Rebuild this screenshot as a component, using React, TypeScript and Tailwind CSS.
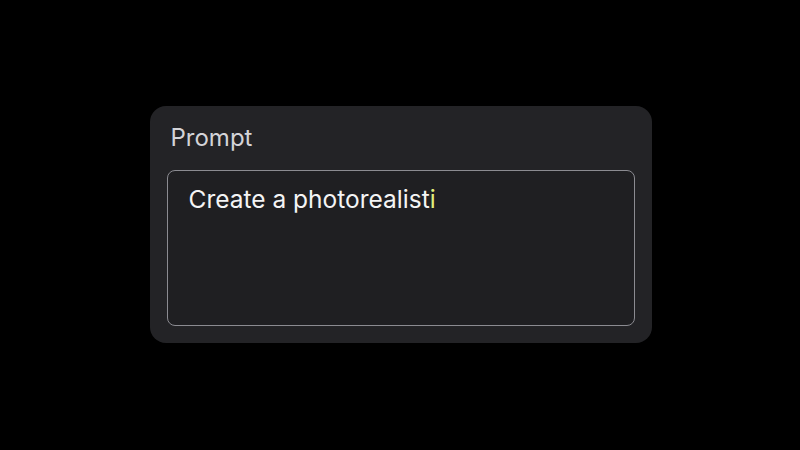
export default function App() {
  return (
    <div className="w-[800px] h-[450px] bg-black flex items-center justify-center" style={{ fontFamily: 'Inter, "Noto Sans", sans-serif' }}>
      <div className="w-[502px] h-[237px] mt-[-1px] ml-[1px] rounded-[16px] bg-[#232326] p-[17px] pt-[17px] flex flex-col">
        <div className="text-[24px] leading-[30px] text-[#d4d4d8] pl-[4px]">Prompt</div>
        <div className="mt-[17px] flex-1 rounded-[8px] border border-[#8b8b91] bg-[#1f1f22] px-[21px] pt-[11px]">
          <div className="text-[24.5px] leading-[34px] text-[#f4f4f5]">
            Create a photorealist<span className="text-[#e3ef7e]">i</span>
          </div>
        </div>
      </div>
    </div>
  );
}
